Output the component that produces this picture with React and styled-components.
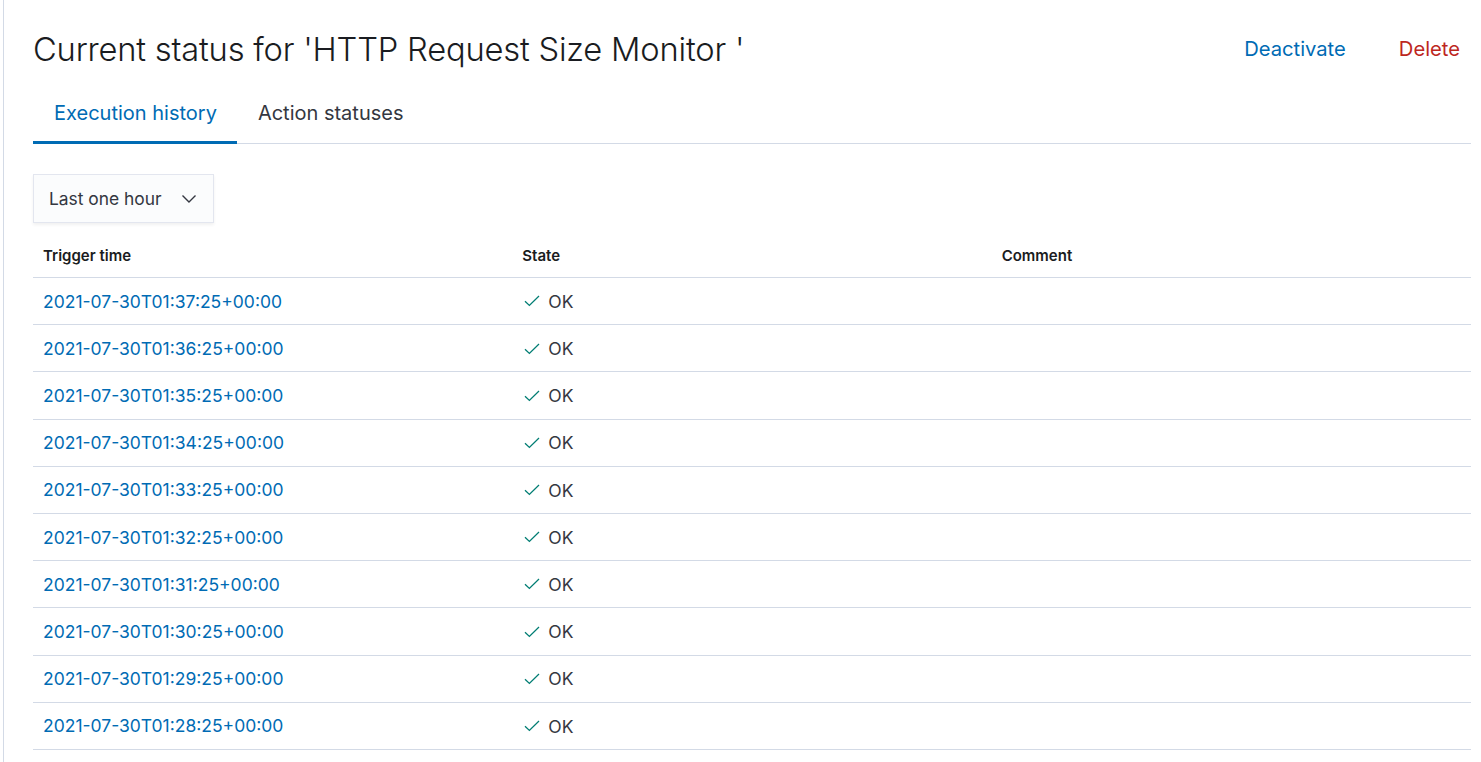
import React from 'react'
import styled, { createGlobalStyle } from 'styled-components'

const GlobalStyle = createGlobalStyle`
  html, body {
    margin: 0;
    padding: 0;
    background: #fff;
    font-family: Inter, "Noto Sans", sans-serif;
    color: #343741;
  }
`

const rows = [
  '2021-07-30T01:37:25+00:00',
  '2021-07-30T01:36:25+00:00',
  '2021-07-30T01:35:25+00:00',
  '2021-07-30T01:34:25+00:00',
  '2021-07-30T01:33:25+00:00',
  '2021-07-30T01:32:25+00:00',
  '2021-07-30T01:31:25+00:00',
  '2021-07-30T01:30:25+00:00',
  '2021-07-30T01:29:25+00:00',
  '2021-07-30T01:28:25+00:00',
]

const CheckIcon = () => (
  <svg width="16" height="12" viewBox="0 0 16 12" fill="none">
    <path d="M1 6.2 L5.4 10.4 L15 1" stroke="#017d73" strokeWidth="1.3" />
  </svg>
)

const Chevron = () => (
  <svg width="16" height="10" viewBox="0 0 16 10" fill="none">
    <path d="M1.5 1.5 L8 8 L14.5 1.5" stroke="#343741" strokeWidth="1.4" />
  </svg>
)

const App = () => {
  return <Page>
    <GlobalStyle />
    <Header>
      <Title>Current status for 'HTTP Request Size Monitor '</Title>
      <Actions>
        <ActionLink>Deactivate</ActionLink>
        <ActionLink $danger>Delete</ActionLink>
      </Actions>
    </Header>

    <Tabs>
      <Tab $active>Execution history</Tab>
      <Tab>Action statuses</Tab>
    </Tabs>

    <Select>
      <span>Last one hour</span>
      <Chevron />
    </Select>

    <Table>
      <thead>
        <tr>
          <Th>Trigger time</Th>
          <Th>State</Th>
          <Th>Comment</Th>
        </tr>
      </thead>
      <tbody>
        {rows.map((time) => (
          <tr key={time}>
            <Td><TimeLink>{time}</TimeLink></Td>
            <Td><State><CheckIcon />OK</State></Td>
            <Td></Td>
          </tr>
        ))}
      </tbody>
    </Table>
  </Page>
}

const Page = styled.div`
  height: 762px;
  overflow: hidden;
  margin-left: 3px;
  border-left: 1px solid #d3dae6;
  padding: 0 10px 0 29px;
`

const Header = styled.div`
  display: flex;
  align-items: center;
  justify-content: space-between;
  height: 97px;
`

const Title = styled.h1`
  margin: 0;
  font-size: 32.7px;
  font-weight: 300;
  color: #1a1c21;
  letter-spacing: -0.2px;
`

const Actions = styled.div`
  display: flex;
  gap: 53px;
  padding-right: 11px;
  align-self: flex-start;
  padding-top: 36px;
`

const ActionLink = styled.button`
  border: none;
  background: none;
  padding: 0;
  font-family: inherit;
  font-size: 20.2px;
  color: ${p => p.$danger ? '#bd271e' : '#006bb4'};
  cursor: pointer;
`

const Tabs = styled.div`
  display: flex;
  border-bottom: 1px solid #d3dae6;
  height: 46px;
`

const Tab = styled.div`
  display: flex;
  align-items: center;
  padding: 0 20px 12px 21px;
  font-size: 20px;
  color: ${p => p.$active ? '#006bb4' : '#343741'};
  border-bottom: 3px solid ${p => p.$active ? '#006bb4' : 'transparent'};
  margin-bottom: -1px;
`

const Select = styled.div`
  margin-top: 30px;
  width: 181px;
  height: 49px;
  box-sizing: border-box;
  display: flex;
  align-items: center;
  justify-content: space-between;
  padding: 0 16px 0 15px;
  background: #fbfcfd;
  border: 1px solid #e3e6ef;
  box-shadow: 0 2px 3px rgba(0, 0, 0, 0.06);
  font-size: 17.4px;
  color: #343741;
`

const Table = styled.table`
  width: 100%;
  border-collapse: collapse;
  table-layout: fixed;
  margin-top: 10px;
`

const Th = styled.th`
  text-align: left;
  font-size: 15px;
  font-weight: 600;
  color: #1a1c21;
  height: 44px;
  padding: 0 10px;
  border-bottom: 1px solid #d3dae6;
`

const Td = styled.td`
  height: 46.2px;
  padding: 0 10px;
  border-bottom: 1px solid #d3dae6;
  font-size: 17.5px;
`

const TimeLink = styled.a`
  color: #006bb4;
  cursor: pointer;
`

const State = styled.span`
  display: inline-flex;
  align-items: center;
  gap: 8px;
  padding-left: 2px;
  color: #343741;
`

export default App
